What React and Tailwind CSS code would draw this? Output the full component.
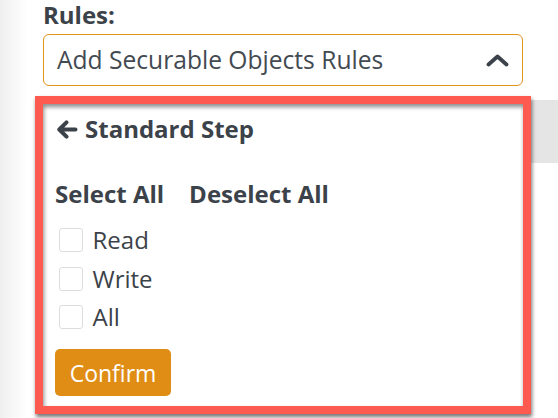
import React from "react";

// dark slate used for all copy
const ink = "text-[#3c4249]";

function ArrowLeft() {
  return (
    <svg width="22" height="19" viewBox="0 0 22 19" fill="none" className="ml-[1px] shrink-0">
      <path
        d="M19.5 9.5H3.5M10.5 2.3L3.3 9.5l7.2 7.2"
        stroke="#3c4249"
        strokeWidth="4"
        strokeLinecap="round"
        strokeLinejoin="round"
      />
    </svg>
  );
}

function ChevronUp() {
  return (
    <svg width="23" height="13" viewBox="0 0 23 13" fill="none">
      <path d="M2.5 10.5L11.5 2.5l9 8" stroke="#3c4249" strokeWidth="3.8" strokeLinecap="round" strokeLinejoin="round" />
    </svg>
  );
}

function CheckRow({ label }) {
  return (
    <label className="flex items-center gap-[10px] h-[24px] ml-[3.5px]">
      <span className="w-[24px] h-[24px] rounded-[3px] border border-[#dddddd] bg-white shrink-0" />
      <span className={`text-[24px] leading-[24px] ${ink}`}>{label}</span>
    </label>
  );
}

export default function App() {
  return (
    <div className="relative w-[558px] h-[418px] overflow-hidden bg-[linear-gradient(to_right,#efefef,#ffffff_28px)] font-['Open_Sans',sans-serif]">
      <div className="pl-[43px] w-[523px]">
        <div className={`text-[24px] leading-[30px] font-bold ${ink}`}>Rules:</div>
        <div className="mt-[4px] h-[52px] w-[480px] border border-[#e3921c] rounded-[6px] flex items-center justify-between pl-[13px] pr-[13px] bg-white">
          <span className="text-[24.6px] leading-[30px] text-[#434a51]">Add Securable Objects Rules</span>
          <ChevronUp />
        </div>
      </div>

      {/* grey band behind the open menu */}
      <div className="mt-[14px] ml-[420px] h-[63px] bg-[#e5e5e5]" />

      {/* open menu, outlined in red */}
      <div className="absolute left-[35px] top-[96px] w-[496px] border-8 border-[#ff5a4f] shadow-[1px_3px_4px_rgba(0,0,0,0.55)]">
        <div className="bg-white shadow-[inset_1px_3px_4px_rgba(0,0,0,0.45)] px-3 pt-[9px] pb-[10px]">
          <div className={`flex items-center gap-[7px] h-[32px] text-[24px] leading-[32px] font-bold ${ink}`}>
            <ArrowLeft />
            <span>Standard Step</span>
          </div>

          <div className={`mt-[33px] flex gap-[25px] text-[24px] leading-[32px] font-bold ${ink}`}>
            <button>Select All</button>
            <button>Deselect All</button>
          </div>

          <div className="mt-[18px] flex flex-col gap-[14.5px]">
            <CheckRow label="Read" />
            <CheckRow label="Write" />
            <CheckRow label="All" />
          </div>

          <button className="mt-[20px] w-[116px] h-[47px] rounded-[5px] bg-[#df8d15] text-white text-[23px] leading-[30px]">
            Confirm
          </button>
        </div>
      </div>
    </div>
  );
}
